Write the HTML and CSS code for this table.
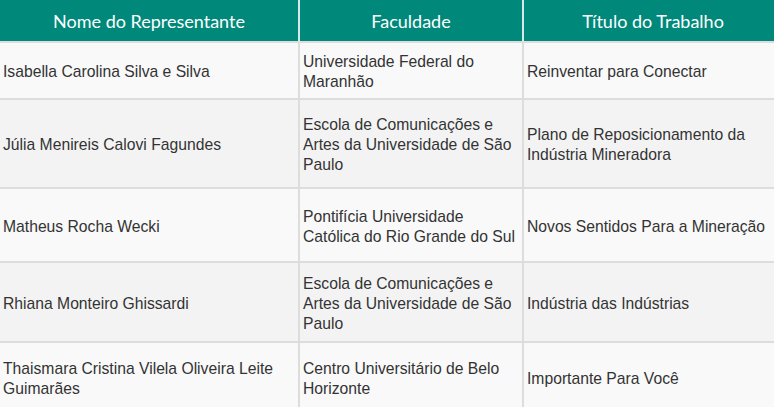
FILE: index.html
```html
<!DOCTYPE html>
<html lang="pt">
<head>
<meta charset="utf-8">
<link rel="stylesheet" href="styles.css">
</head>
<body>
<table class="tbl">
  <colgroup>
    <col class="c1"><col class="c2"><col class="c3">
  </colgroup>
  <thead>
    <tr class="head">
      <th>Nome do Representante</th>
      <th>Faculdade</th>
      <th>Título do Trabalho</th>
    </tr>
  </thead>
  <tbody>
    <tr class="row r1">
      <td>Isabella Carolina Silva e Silva</td>
      <td>Universidade Federal do Maranhão</td>
      <td>Reinventar para Conectar</td>
    </tr>
    <tr class="row r2">
      <td>Júlia Menireis Calovi Fagundes</td>
      <td>Escola de Comunicações e Artes da Universidade de São Paulo</td>
      <td>Plano de Reposicionamento da Indústria Mineradora</td>
    </tr>
    <tr class="row r3">
      <td>Matheus Rocha Wecki</td>
      <td>Pontifícia Universidade Católica do Rio Grande do Sul</td>
      <td>Novos Sentidos Para a Mineração</td>
    </tr>
    <tr class="row r4">
      <td>Rhiana Monteiro Ghissardi</td>
      <td>Escola de Comunicações e Artes da Universidade de São Paulo</td>
      <td>Indústria das Indústrias</td>
    </tr>
    <tr class="row r5">
      <td>Thaismara Cristina Vilela Oliveira Leite Guimarães</td>
      <td>Centro Universitário de Belo Horizonte</td>
      <td>Importante Para Você</td>
    </tr>
  </tbody>
</table>
</body>
</html>
```

FILE: styles.css
```css
html, body {
  margin: 0;
  padding: 0;
  background: #ffffff;
  overflow: hidden;
}

.tbl {
  width: 784px;
  table-layout: fixed;
  border-collapse: separate;
  border-spacing: 0;
}

.c1 { width: 300px; }
.c2 { width: 224px; }
.c3 { width: 260px; }

.tbl th,
.tbl td {
  box-sizing: border-box;
  border-right: 2px solid #dddddd;
  border-bottom: 2px solid #dddddd;
  vertical-align: middle;
}

.head th {
  height: 43px;
  padding: 0 4px;
  background: #00897b;
  color: #ffffff;
  font-family: Lato, "Open Sans", sans-serif;
  font-weight: 400;
  font-size: 18px;
  text-align: center;
  border-right-color: #d7e9e6;
}

.row td {
  padding: 3px 6px 0 3px;
  font-family: "Liberation Sans", Arial, sans-serif;
  font-size: 15.7px;
  line-height: 20px;
  color: #333333;
  text-align: left;
}

.r1 td, .r3 td, .r5 td { background: #f9f9f9; }
.r2 td, .r4 td { background: #f3f3f3; }

.r1 td { height: 57px; }
.r2 td { height: 89px; }
.r3 td { height: 74px; }
.r4 td { height: 80px; }
.r5 td { height: 70px; }
```
